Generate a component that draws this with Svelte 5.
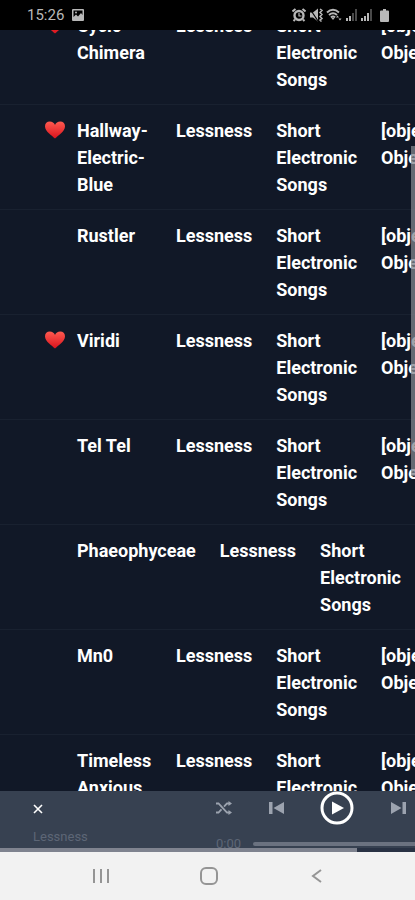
<script>
  const songs = [
    { title: 'Cyclo Chimera', liked: true },
    { title: 'Hallway-Electric-Blue', liked: true },
    { title: 'Rustler', liked: false },
    { title: 'Viridi', liked: true },
    { title: 'Tel Tel', liked: false },
    { title: 'Phaeophyceae', liked: false },
    { title: 'Mn0', liked: false },
    { title: 'Timeless Anxious', liked: false }
  ];
  const artist = 'Lessness';
  const album = 'Short Electronic Songs';
  const meta = '[object Object]';
  const loaded = 86;
  let position = $state(0);
</script>

<div class="screen">
  <header class="status">
    <time>15:26</time>
    <svg class="photo" viewBox="0 0 12 12" width="12" height="12" aria-hidden="true">
      <path fill-rule="evenodd" d="M1 0h10q1 0 1 1v10q0 1-1 1H1q-1 0-1-1V1Q0 0 1 0ZM1.500 1.500V8L4 5.500 6 7.500 9 4l1.500 2V1.500Z" />
      <circle cx="4" cy="3.500" r="1" />
    </svg>
    <div class="indicators" aria-hidden="true">
      <svg viewBox="0 0 14 14" width="14" height="14">
        <path d="M.5 3.500 3.500 1M13.500 3.500 10.500 1M3 11.500 1.500 13M11 11.500l1.500 1.500" fill="none" stroke="currentColor" stroke-width="2" />
        <circle cx="7" cy="7.500" r="4.500" fill="none" stroke="currentColor" stroke-width="2.400" />
        <path d="M7 5v3h2.500" fill="none" stroke="currentColor" stroke-width="1.200" />
      </svg>
      <svg viewBox="0 0 14 14" width="14" height="14">
        <path d="M1 4.500h3l5-4v13L4 9.500H1Z" />
        <path d="M1 1l8 12" stroke="#000" stroke-width="1.200" />
        <path d="M11 1l2 1.500-2 2 2 2-2 2 2 2-2 1.500 1.500 1.500" fill="none" stroke="currentColor" stroke-width="1.500" />
      </svg>
      <svg viewBox="0 0 17 14" width="17" height="14">
        <path d="M1 4.500Q7 -1 13 4.500M3 7q4-3.500 8 0M5 9.500q2-2 4 0" fill="none" stroke="currentColor" stroke-width="2" />
        <path d="M5.500 10h3L7 12ZM10 9.500 11.500 7.500 13 9.500ZM12.500 10.500h3L14 12.500Z" />
      </svg>
      <svg viewBox="0 0 12 12" width="12" height="12">
        <path d="M0 9h2v3H0ZM3 7h2v5H3Z" /><path opacity=".4" d="M6 4h2v8H6ZM9 0h2v12H9Z" />
      </svg>
      <svg viewBox="0 0 12 12" width="12" height="12">
        <path d="M0 9h2v3H0ZM3 7h2v5H3ZM6 4h2v8H6Z" /><path opacity=".4" d="M9 0h2v12H9Z" />
      </svg>
      <svg class="battery" viewBox="0 0 9 13" width="9" height="13">
        <path d="M3 0h3v1.500h2q1 0 1 1V12q0 1-1 1H1q-1 0-1-1V2.500q0-1 1-1h2Z" />
      </svg>
    </div>
  </header>

  <main>
    <table>
      <tbody>
        {#each songs as song}
          <tr>
            <td class="like">
              {#if song.liked}
                <svg viewBox="0 0 20 18" width="20" height="18" role="img" aria-label="Liked">
                  <defs>
                    <linearGradient id="heart" x1="0" y1="0" x2="0" y2="1">
                      <stop offset="0" stop-color="#ff5a50" />
                      <stop offset="1" stop-color="#d9121c" />
                    </linearGradient>
                  </defs>
                  <path fill="url(#heart)" d="M10 17.500C7 14.500 0 10.500 0 5.200 0 2.500 2 .5 4.800.5 7.200.5 9.200 1.800 10 4 10.800 1.800 12.800.5 15.200.5 18 .5 20 2.500 20 5.200 20 10.500 13 14.500 10 17.500Z" />
                </svg>
              {/if}
            </td>
            <td class="title">{song.title}</td>
            <td class="artist">{artist}</td>
            <td class="album">{album}</td>
            <td class="meta">{meta}</td>
          </tr>
        {/each}
      </tbody>
    </table>
    <div class="thumb"></div>
  </main>

  <footer class="player">
    <div class="track">
      <button class="close" aria-label="Close player">
        <svg viewBox="0 0 10 10" width="10" height="10"><path d="M1 1l8 8M9 1 1 9" fill="none" stroke="currentColor" stroke-width="1.600" /></svg>
      </button>
      <span class="now">{artist}</span>
    </div>
    <div class="deck">
      <div class="controls">
        <button aria-label="Shuffle">
          <svg viewBox="0 0 16 14" width="16" height="14">
            <path d="M0 2.500h2.500L11 11.500h3M0 11.500h2.500L5.500 8.300M8 5.700 11 2.500h3" fill="none" stroke="currentColor" stroke-width="1.800" />
            <path d="M12.500 0 16 2.500 12.500 5ZM12.500 9 16 11.500 12.500 14Z" />
          </svg>
        </button>
        <button aria-label="Previous">
          <svg viewBox="0 0 16 12" width="16" height="12"><path d="M1 0h3.500v12H1ZM16 0v12L5.500 6Z" /></svg>
        </button>
        <button class="play" aria-label="Play">
          <svg viewBox="0 0 34 34" width="34" height="34">
            <circle cx="17" cy="17" r="15" fill="none" stroke="currentColor" stroke-width="3" />
            <path d="M12 10.500v13L24 17Z" />
          </svg>
        </button>
        <button aria-label="Next">
          <svg viewBox="0 0 16 12" width="16" height="12"><path d="M12.500 0H16v12h-3.500ZM1 0v12l10.500-6Z" /></svg>
        </button>
      </div>
      <div class="seek">
        <span>0:00</span>
        <input type="range" min="0" max="100" aria-label="Seek" bind:value={position} />
      </div>
    </div>
    <div class="loaded"><div style="width: {loaded}%"></div></div>
  </footer>

  <nav>
    <button aria-label="Recent apps">
      <svg viewBox="0 0 18 16" width="18" height="16"><path d="M2 1v14M9 1v14M16 1v14" /></svg>
    </button>
    <button aria-label="Home">
      <svg viewBox="0 0 18 18" width="18" height="18"><rect x="1" y="1" width="16" height="16" rx="5" /></svg>
    </button>
    <button aria-label="Back">
      <svg viewBox="0 0 18 16" width="18" height="16"><path d="M13 2 5 8l8 6" /></svg>
    </button>
  </nav>
</div>

<style>
  :global(body) {
    margin: 0;
    background: #111827;
  }
  .screen {
    display: flex;
    flex-direction: column;
    height: 100vh;
    overflow: hidden;
    background: #111827;
    color: #fff;
    font-family: Roboto, 'Liberation Sans', sans-serif;
  }
  svg {
    display: block;
    fill: currentColor;
  }
  button {
    display: flex;
    align-items: center;
    justify-content: center;
    padding: 0;
    border: 0;
    background: none;
    color: inherit;
  }
  .status {
    position: fixed;
    inset: 0 0 auto;
    z-index: 2;
    box-sizing: border-box;
    display: flex;
    align-items: center;
    gap: 8px;
    height: 30px;
    padding: 0 26px 0 27px;
    background: #000;
    color: #b8b8b8;
    font-size: 15px;
  }
  .indicators {
    display: flex;
    align-items: center;
    gap: 3px;
    margin-left: auto;
  }
  .battery {
    margin-left: 4px;
  }
  main {
    position: relative;
    flex: 1;
    min-height: 0;
    overflow: hidden;
  }
  table,
  tbody {
    display: block;
  }
  tr {
    display: flex;
    padding: 12px 0 11px 45px;
    border-bottom: 1px solid #192130;
  }
  td {
    flex: none;
    padding: 0;
    margin-right: 24px;
    font-size: 18px;
    font-weight: 700;
    line-height: 27px;
  }
  .like {
    width: 20px;
    margin-right: 12px;
  }
  .like svg {
    margin-top: 4px;
  }
  .title {
    flex-basis: 75px;
  }
  .artist {
    flex-basis: 76px;
  }
  .album {
    flex-basis: 80px;
  }
  .meta {
    flex-basis: 60px;
  }
  .thumb {
    position: absolute;
    top: 146px;
    right: 0;
    width: 4px;
    height: 330px;
    background: rgb(128 132 142 / 75%);
  }
  .player {
    position: relative;
    display: flex;
    height: 61px;
    background: #374151;
    color: #9ca3af;
  }
  .track {
    display: flex;
    flex: 1;
    flex-direction: column;
    align-items: flex-start;
    gap: 9px;
    padding: 8px 0 0 33px;
  }
  .close {
    width: 10px;
    height: 20px;
    color: #fff;
  }
  .now {
    color: #5d6676;
    font-size: 13px;
    line-height: 18px;
  }
  .deck {
    display: flex;
    flex-direction: column;
    width: 199px;
  }
  .controls {
    display: flex;
    align-items: center;
    justify-content: space-between;
    height: 34px;
    padding-right: 9px;
  }
  .play {
    color: #fff;
  }
  .seek {
    display: flex;
    align-items: center;
    gap: 12px;
    height: 18px;
    margin-top: 10px;
    color: #5d6676;
    font-size: 13px;
  }
  input {
    flex: 1;
    min-width: 0;
    height: 4px;
    margin: 0;
    border-radius: 2px 0 0 2px;
    background: #6b7280;
    appearance: none;
  }
  input::-webkit-slider-thumb {
    width: 0;
    height: 0;
    appearance: none;
  }
  .loaded {
    position: absolute;
    inset: auto 0 0;
    height: 4px;
    background: #293244;
  }
  .loaded div {
    height: 4px;
    background: #7f838f;
  }
  nav {
    display: flex;
    align-items: center;
    justify-content: center;
    gap: 90px;
    height: 48px;
    padding-left: 3px;
    background: #f2f2f2;
    color: #959595;
  }
  nav svg {
    fill: none;
    stroke: currentColor;
    stroke-width: 2;
  }
</style>
